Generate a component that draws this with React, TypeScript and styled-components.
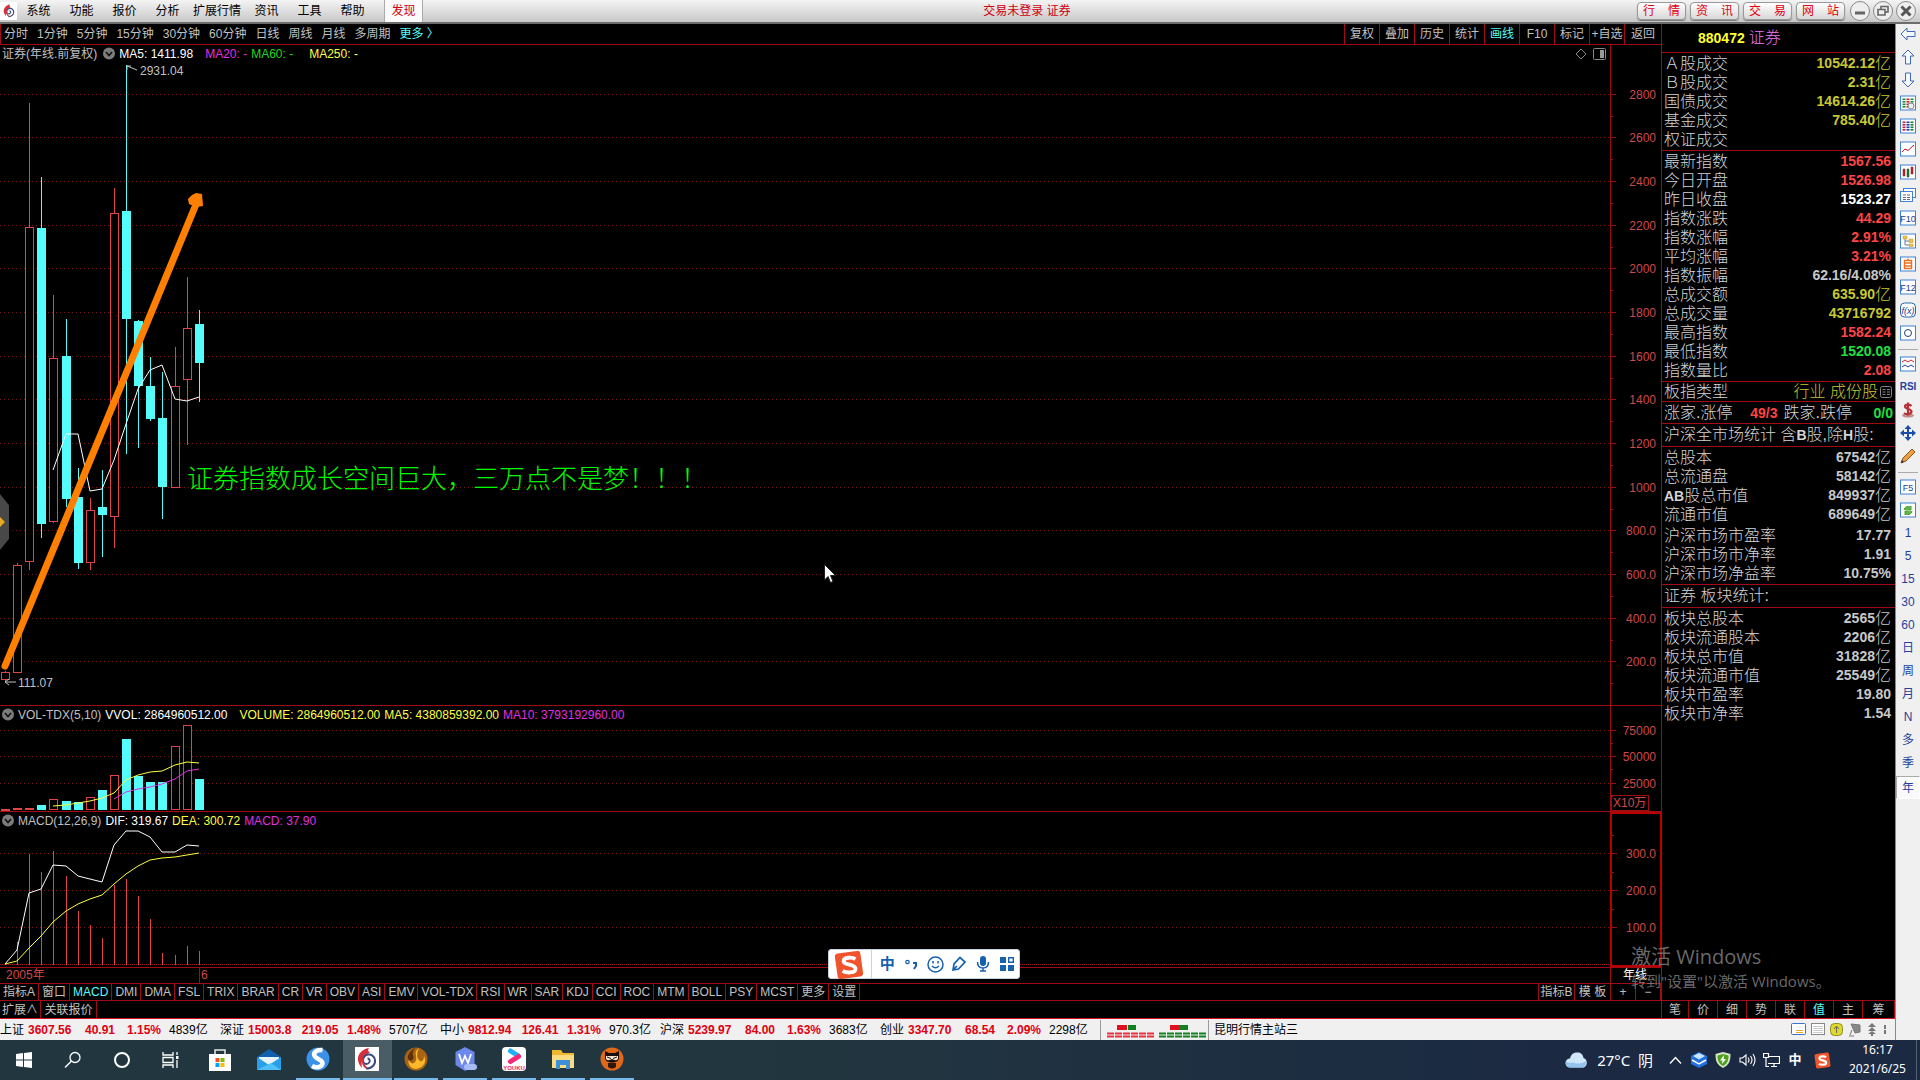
import React from 'react';
import styled, { createGlobalStyle } from 'styled-components';

const RED = '#a00c14';
const CYAN = '#54fcfc';
const CANDLE_RED = '#e04444';

const GlobalStyle = createGlobalStyle`
  * { box-sizing: border-box; }
  body { margin: 0; background: #000; overflow: hidden; }
  body, button { font-family: "Liberation Sans", "Noto Sans CJK SC", sans-serif; font-size: 12px; font-weight: 400; }
  button { margin: 0; padding: 0; border: 0; background: none; color: inherit; white-space: nowrap; line-height: 16px; cursor: default; }
  b { font-weight: 700; }
  svg { display: block; flex-shrink: 0; }
  svg text { font-family: "Liberation Sans", "Noto Sans CJK SC", sans-serif; }
  dl, dt, dd, h1, h2, p { margin: 0; font-weight: inherit; }
`;

/* ---------- frame ---------- */
const Screen = styled.div`
  position: relative; display: flex; flex-direction: column; height: 100vh; min-height: 700px;
  color: #c0c0c0; overflow: hidden; line-height: 16px;
`;
const Work = styled.div`display: flex; flex: 1; min-height: 0;`;
const Terminal = styled.main`display: flex; flex-direction: column; flex: 1; min-width: 0; border-right: 1px solid #888;`;
const Upper = styled.div`display: flex; flex: 1; min-height: 0;`;
const ChartColumn = styled.section`display: flex; flex-direction: column; flex: 1; min-width: 0; overflow: hidden;`;

/* ---------- menu bar ---------- */
const MenuBar = styled.header`
  display: grid; grid-template-columns: 1fr auto 1fr; align-items: center; height: 24px; flex-shrink: 0;
  background: linear-gradient(#f4f4f4, #c8c8c8); border-bottom: 2px solid #6c6c6c; color: #000;
`;
const MenuLeft = styled.nav`display: flex; align-items: center; height: 22px;`;
const Logo = styled.div`display: flex; align-items: center; justify-content: center; width: 17px; height: 18px; background: #fff;`;
const MenuItem = styled.button`min-width: 43px; padding: 0 4px; height: 22px;`;
const Discover = styled(MenuItem)`
  min-width: 39px; margin-left: 10px; color: #d00010; background: #fafafa; border: solid #aaa; border-width: 0 1px;
`;
const LoginTitle = styled.div`color: #d00010; padding-left: 134px;`;
const MenuRight = styled.div`display: flex; justify-content: flex-end; align-items: center; gap: 4px; padding-right: 6px;`;
const PillButton = styled.button`
  display: flex; justify-content: space-between; align-items: center; width: 49px; height: 18px; padding: 0 5px;
  border: 1px solid #999; border-radius: 4px; color: #e00010;
  background: linear-gradient(#fff, #d8d8d8); box-shadow: 0 1px 1px #777;
`;
const RoundButton = styled.button`
  display: flex; align-items: center; justify-content: center; width: 20px; height: 20px; margin-right: -2px; margin-left: 1px;
  border: 1px solid #888; border-radius: 50%; background: #eee; color: #666;
`;

/* ---------- period row ---------- */
const PeriodRow = styled.nav`
  display: flex; justify-content: space-between; height: 21px; flex-shrink: 0; border-bottom: 1px solid ${RED}; border-left: 1px solid ${RED};
`;
const Periods = styled.div`display: flex; gap: 9px; padding-left: 3px; align-items: center;`;
const PeriodButton = styled.button<{ $on?: boolean }>`color: ${p => (p.$on ? CYAN : '#c0c0c0')}; flex-shrink: 0;`;
const Tools = styled.div`display: flex;`;
const ToolButton = styled.button<{ $on?: boolean }>`
  width: 35px; border-left: 1px solid ${RED}; color: ${p => (p.$on ? CYAN : '#c0c0c0')};
  &:last-child { width: 37px; }
`;

/* ---------- chart panels ---------- */
const Panel = styled.div<{ $height?: number }>`
  display: flex; border-bottom: 1px solid ${RED}; overflow: hidden; flex: ${p => (p.$height ? `0 0 ${p.$height}px` : '1 1 0')};
`;
const Plot = styled.div`position: relative; flex: 1; min-width: 0; display: flex; flex-direction: column;`;
const Legend = styled.div`display: flex; align-items: center; height: 17px; padding-left: 2px; gap: 4px; white-space: nowrap;`;
const LegendItem = styled.span<{ $color: string; $after?: number }>`color: ${p => p.$color}; margin-right: ${p => p.$after || 0}px;`;
const Canvas = styled.svg`flex: 1; width: 100%; min-height: 0;`;
const Axis = styled.div<{ $strong?: boolean }>`
  width: 51px; flex-shrink: 0; display: flex; position: relative;
  border-left: 1px solid ${RED};
  ${p => p.$strong && 'border: 2px solid #b80000; border-right-width: 1px; border-left-width: 2px;'}
`;
const AxisCanvas = styled.svg`width: 100%; height: 100%;`;
const UnitTag = styled.span`
  position: absolute; left: 0; bottom: 0; width: 38px; height: 16px; border: 1px solid ${RED}; color: #d04848; padding-left: 1px; line-height: 14px;
`;
const PanelToggle = styled.div`
  position: absolute; left: 0; top: 449px; width: 9px; height: 56px; background: #484848; overflow: hidden;
  clip-path: polygon(0 0, 100% 20%, 100% 80%, 0 100%); display: flex; align-items: center;
`;
const ChartNote = styled.p`
  position: absolute; left: 187px; top: 416px; color: #00f800; font-size: 26px; font-weight: 300; line-height: 36px; white-space: nowrap;
`;
const CornerIcons = styled.div`position: absolute; right: 4px; top: 3px; display: flex; gap: 6px; align-items: center;`;

const DateRow = styled.div`
  display: flex; height: 16px; flex-shrink: 0; border-bottom: 1px solid ${RED}; color: #d04848; line-height: 15px;
`;
const DateStart = styled.span`width: 199px; padding-left: 6px;`;
const DateTick = styled.span`flex: 1; border-left: 1px solid ${RED}; padding-left: 1px;`;
const DatePeriod = styled.span`width: 51px; border-left: 1px solid ${RED}; padding-left: 12px; color: #fff;`;

const TabRow = styled.nav`display: flex; height: 17px; flex-shrink: 0; border-bottom: 1px solid ${RED};`;
const Tab = styled.button<{ $on?: boolean; $width?: number }>`
  padding: 0 3px; ${p => (p.$width ? `width: ${p.$width}px; padding: 0;` : '')}
  border-right: 1px solid ${RED}; color: ${p => (p.$on ? CYAN : '#c0c0c0')}; flex-shrink: 0;
`;
const Spacer = styled.div`flex: 1; border-right: 1px solid ${RED};`;
const ExtRow = styled(TabRow)`height: 18px; border-bottom-color: #d01020;`;

/* ---------- quote panel ---------- */
const Quote = styled.aside`
  width: 234px; flex-shrink: 0; border-left: 1px solid ${RED}; border-bottom: 1px solid ${RED};
  color: #d4d4d4; font-size: 16px; font-weight: 300; overflow: hidden;
`;
const QuoteHead = styled.h1`
  display: flex; align-items: center; gap: 4px; height: 29px; padding-left: 36px; border-bottom: 1px solid ${RED}; font-size: 16px; color: #f078f8;
`;
const Code = styled.b`font-size: 14px; color: #ffff30;`;
const Block = styled.dl`padding: 1px 0; border-bottom: 1px solid ${RED}; &:last-child { border: 0; }`;
const Row = styled.div<{ $gap?: boolean }>`
  display: flex; justify-content: space-between; align-items: center; height: 19px; padding: 0 4px 0 2px; line-height: 19px;
  margin-top: ${p => (p.$gap ? '2px' : '0')}; white-space: nowrap;
`;
const Name = styled.dt`b { font-size: 14px; }`;
const Value = styled.dd<{ $color?: string }>`
  display: flex; align-items: center; color: ${p => p.$color || '#c8c8c8'}; font-size: 16px;
  b { font-size: 14px; }
`;
const Strip = styled.h2<{ $height: number }>`
  display: flex; align-items: center; justify-content: space-between; height: ${p => p.$height}px; padding: 0 2px;
  border-bottom: 1px solid ${RED}; font-size: 16px; white-space: pre;
  b { font-size: 14px; }
`;
const Tint = styled.span<{ $color: string }>`color: ${p => p.$color}; display: inline-flex; align-items: center; gap: 2px;`;

/* ---------- side tool strip ---------- */
const Side = styled.nav`display: flex; flex-direction: column; width: 24px; flex-shrink: 0; background: #f0f0f0;`;
const SideButton = styled.button<{ $on?: boolean }>`
  display: flex; align-items: center; justify-content: center; height: 23px; padding-bottom: 3px; color: #24409c; font-size: 12px;
  ${p => p.$on && 'background: #fafafa; border: 1px solid #aaa; border-right-color: #fff; border-bottom-color: #fff; padding: 0;'}
`;
const SideRule = styled.div`height: 1px; margin: 3px 2px 4px; background: #aaa;`;
const RsiText = styled.b`font-size: 10px;`;

/* ---------- status bar ---------- */
const Status = styled.footer`
  display: flex; align-items: center; height: 21px; flex-shrink: 0; background: #f0f0f0; color: #000; overflow: hidden;
`;
const Index = styled.div`
  display: grid; grid-template-columns: 28px 46px 52px 36px 58px; width: 220px; flex-shrink: 0; white-space: nowrap;
  b { color: #e00010; text-align: center; }
  b:nth-child(2) { text-align: left; }
  span:last-child { padding-left: 7px; }
`;
const Meter = styled.div`border: solid #999; border-width: 0 1px; width: 109px; height: 20px; flex-shrink: 0;`;
const Server = styled.span`padding-left: 5px; flex: 1;`;
const StatusIcons = styled.div`display: flex; align-items: center; gap: 5px; padding-right: 7px;`;

/* ---------- taskbar ---------- */
const Taskbar = styled.div`
  display: flex; justify-content: space-between; height: 40px; flex-shrink: 0; background: linear-gradient(90deg, #21363f, #22363f 40%, #1b2a42 80%); color: #fff;
`;
const Apps = styled.div`display: flex;`;
const AppButton = styled.button<{ $run?: boolean; $on?: boolean }>`
  display: flex; align-items: center; justify-content: center; width: 49px; height: 40px; padding-right: 2px;
  background: ${p => (p.$on ? '#4a5c66' : 'none')};
  ${p => p.$run && `border-bottom: 2px solid; border-image: linear-gradient(90deg, transparent ${p.$on ? 0 : 4}px, #76b9ed ${p.$on ? 0 : 4}px, #76b9ed ${p.$on ? 49 : 44}px, transparent ${p.$on ? 49 : 44}px) 2;`}
`;
const Tray = styled.div`
  display: flex; align-items: center; font-family: "Noto Sans", "Noto Sans CJK SC", sans-serif; padding-right: 3px;
`;
const Weather = styled.button`
  display: flex; align-items: center; gap: 10px; font-family: inherit; font-size: 15px; margin-right: 12px;
`;
const TrayIcons = styled.div`display: flex; align-items: center; gap: 4px; button { width: 20px; display: flex; justify-content: center; font-size: 13px; font-weight: 700; }`;
const Sogou = styled.div`margin: 0 8px 0 9px;`;
const Clock = styled.button`
  display: flex; flex-direction: column; align-items: center; width: 78px; font-family: inherit; font-size: 12px; line-height: 19px;
  border-right: 1px solid #53606f; height: 40px;
`;

/* ---------- floating items ---------- */
const Ime = styled.div`
  position: absolute; left: 43.1%; bottom: 101px; width: 192px; height: 30px; display: flex; align-items: center; background: #fff; border: 1px solid #c4d4e4; border-radius: 3px;
  padding: 0 0 0 5px; color: #1660b0;
`;
const ImeLogo = styled.div`width: 39px; height: 28px; border-right: 1px solid #f4c4b4; margin-right: 3px;`;
const ImeButton = styled.button`width: 24px; display: flex; justify-content: center; align-items: center; font-size: 15px; font-weight: 700;`;
const Watermark = styled.div`
  position: absolute; right: 92px; bottom: 89px; width: 197px; color: #868686cc; font-family: "Open Sans", "Noto Sans CJK SC", sans-serif; white-space: nowrap; pointer-events: none;
`;
const WmTitle = styled.p`font-size: 20px; line-height: 28px;`;
const WmText = styled.p`font-size: 15px; line-height: 20px;`;
const Pointer = styled.svg`position: absolute; left: 824px; top: 564px;`;

/* ---------- data ---------- */
const menus = ['系统', '功能', '报价', '分析', '扩展行情', '资讯', '工具', '帮助'];
const periods = ['分时', '1分钟', '5分钟', '15分钟', '30分钟', '60分钟', '日线', '周线', '月线', '多周期', '更多 〉'];
const tools = ['复权', '叠加', '历史', '统计', '画线', 'F10', '标记', '+自选', '返回'];
const indicators = ['指标A', '窗口', 'MACD', 'DMI', 'DMA', 'FSL', 'TRIX', 'BRAR', 'CR', 'VR', 'OBV', 'ASI', 'EMV', 'VOL-TDX', 'RSI', 'WR', 'SAR', 'KDJ', 'CCI', 'ROC', 'MTM', 'BOLL', 'PSY', 'MCST', '更多', '设置'];
const panes = ['笔', '价', '细', '势', '联', '值', '主', '筹'];
const indices = [
  ['上证', '3607.56', '40.91', '1.15%', '4839亿'],
  ['深证', '15003.8', '219.05', '1.48%', '5707亿'],
  ['中小', '9812.94', '126.41', '1.31%', '970.3亿'],
  ['沪深', '5239.97', '84.00', '1.63%', '3683亿'],
  ['创业', '3347.70', '68.54', '2.09%', '2298亿'],
];

const Y = '#c8c832', R = '#ff4444', W = '#ffffff', G = '#20e040';
type QuoteRow = [string, string, string?];
const turnover: QuoteRow[] = [['Ａ股成交', '10542.12亿', Y], ['Ｂ股成交', '2.31亿', Y], ['国债成交', '14614.26亿', Y], ['基金成交', '785.40亿', Y], ['权证成交', '', Y]];
const prices: QuoteRow[] = [
  ['最新指数', '1567.56', R], ['今日开盘', '1526.98', R], ['昨日收盘', '1523.27', W], ['指数涨跌', '44.29', R], ['指数涨幅', '2.91%', R], ['平均涨幅', '3.21%', R],
  ['指数振幅', '62.16/4.08%'], ['总成交额', '635.90亿', Y], ['总成交量', '43716792', Y], ['最高指数', '1582.24', R], ['最低指数', '1520.08', G], ['指数量比', '2.08', R],
];
const market: QuoteRow[] = [
  ['总股本', '67542亿'], ['总流通盘', '58142亿'], ['AB股总市值', '849937亿'], ['流通市值', '689649亿'], ['沪深市场市盈率', '17.77'], ['沪深市场市净率', '1.91'], ['沪深市场净益率', '10.75%'],
];
const sector: QuoteRow[] = [['板块总股本', '2565亿'], ['板块流通股本', '2206亿'], ['板块总市值', '31828亿'], ['板块流通市值', '25549亿'], ['板块市盈率', '19.80'], ['板块市净率', '1.54']];

const barX = [5, 17, 29, 41, 53, 66, 78, 90, 102, 114, 126, 138, 150, 162, 175, 187, 199];

/* [up, high, body top, body bottom, low], measured from the top of the screen */
const candles: [boolean, number, number, number, number][] = [
  [true, 671, 672, 679, 681], [true, 563, 565, 672, 672], [true, 103, 227, 561, 570], [false, 177, 228, 523, 538], [true, 295, 358, 521, 523],
  [false, 319, 356, 498, 507], [false, 468, 497, 562, 569], [true, 498, 510, 562, 570], [false, 470, 507, 514, 557], [true, 188, 213, 516, 548],
  [false, 65, 211, 318, 454], [false, 320, 321, 385, 448], [false, 357, 386, 418, 421], [false, 372, 418, 486, 519], [true, 347, 386, 487, 487],
  [true, 277, 328, 379, 445], [false, 310, 324, 362, 402],
];
const ma5 = [470, 434, 434, 491, 489, 460, 424, 389, 370, 365, 399, 401, 397];
const volume = [809, 808, 808, 805, 799, 801, 802, 797, 790, 775, 739, 776, 782, 782, 746, 725, 779];
const volMa5 = [806, 805, 803, 801, 798, 793, 780, 775, 772, 771, 765, 762, 763];
const volMa10 = [799, 792, 789, 787, 784, 779, 771, 769];
const hist = [964, 942, 854, 872, 851, 876, 911, 925, 938, 885, 879, 896, 919, 953, 955, 946, 951];
const dif = [964, 950, 893, 889, 865, 866, 876, 879, 882, 845, 831, 831, 837, 852, 852, 845, 846];
const dea = [964, 961, 948, 936, 922, 911, 904, 899, 895, 884, 874, 866, 860, 858, 857, 855, 853];

const line = (ys: number[]) => ys.map((y, i) => `${barX[barX.length - ys.length + i]},${y}`).join(' ');

const priceTicks: [number, string][] = [
  [94, '2800'], [137, '2600'], [181, '2400'], [225, '2200'], [268, '2000'], [312, '1800'], [356, '1600'],
  [399, '1400'], [443, '1200'], [487, '1000'], [530, '800.0'], [574, '600.0'], [618, '400.0'], [661, '200.0'],
];
const volTicks: [number, string][] = [[730, '75000'], [756, '50000'], [783, '25000']];
const macdTicks: [number, string][] = [[853, '300.0'], [890, '200.0'], [927, '100.0']];

const Grid = ({ ticks }: { ticks: [number, string][] }) => (
  <>{ticks.map(([y]) => <line key={y} x1="0" x2="100%" y1={y + 0.5} y2={y + 0.5} stroke="#78141a" strokeDasharray="1 3" />)}</>
);

const Ticks = ({ ticks, top, step, right = 45 }: { ticks: [number, string][]; top: number; step: number; right?: number }) => (
  <AxisCanvas>
    <g transform={`translate(0 ${-top})`}>
      {ticks.map(([y, label]) => (
        <React.Fragment key={y}>
          <line x1="0" x2="5" y1={y + 0.5} y2={y + 0.5} stroke={RED} />
          <line x1="0" x2="2" y1={y + step + 0.5} y2={y + step + 0.5} stroke={RED} />
          <text x={right} y={y + 5} textAnchor="end" fontSize="12" fill="#d04848">{label}</text>
        </React.Fragment>
      ))}
    </g>
  </AxisCanvas>
);

const Chevron = () => (
  <svg width="12" height="13" viewBox="0 0 12 13"><circle cx="6" cy="6.5" r="6" fill="#7c7c7c" /><path d="M3 5l3 3.5L9 5" fill="none" stroke="#111" strokeWidth="1.6" /></svg>
);

const Swirl = ({ size }: { size: number }) => (
  <svg width={size} height={size} viewBox="0 0 24 24">
    <rect width="24" height="24" fill="#fff" />
    <path d="M14 1C7 2 2.500 7 3 13c.3 3 2 6 4 8C6 15 7 9 15 5.500 13 4.500 12.500 3 14 1z" fill="#d8303a" />
    <path d="M11 21.500c6 0 9.500-4 9-8.500-.5-4-4-6-7-5.500-4 .7-6 5-4.500 8 1 2 5 2 6-.5.700-2-.5-3.500-2-3.500" fill="none" stroke="#3c4c80" strokeWidth="2" />
    <path d="M8.500 11c-1.500 4-.5 7.500 3 10" fill="none" stroke="#d8303a" strokeWidth="1.800" />
  </svg>
);

const SogouLogo = ({ size }: { size: number }) => (
  <svg width={size} height={size} viewBox="0 0 28 28">
    <rect x="2" y="2" width="24" height="24" rx="3" fill="#f0542c" transform="rotate(-8 14 14)" />
    <path d="M20 8.500C17 6.500 9 6.500 9 10.500c0 4 11 2.500 11 7 0 4.500-8.500 4-12 2" fill="none" stroke="#fff" strokeWidth="3.600" />
  </svg>
);

const Rows = ({ rows, gapAt }: { rows: QuoteRow[]; gapAt?: number }) => (
  <Block>
    {rows.map(([name, value, color], i) => {
      const unit = value.endsWith('亿') ? '亿' : '';
      return (
        <Row key={name} $gap={i === gapAt}>
          <Name>{name.startsWith('AB') ? <><b>AB</b>{name.slice(2)}</> : name}</Name>
          <Value $color={color}><b>{unit ? value.slice(0, -1) : value}</b>{unit}</Value>
        </Row>
      );
    })}
  </Block>
);

/* ---------- side icons ---------- */
const Framed = ({ children }: { children?: React.ReactNode }) => (
  <svg width="16" height="16" viewBox="0 0 16 16"><rect x="0.5" y="1" width="15" height="14" fill="#fff" stroke="#4080d8" />{children}</svg>
);
const FramedText = ({ label }: { label: string }) => (
  <Framed><text x="8" y="12" fontSize="9" textAnchor="middle" fill="#1c3c98">{label}</text></Framed>
);
const Arrow = ({ turn }: { turn: number }) => (
  <svg width="16" height="16" viewBox="0 0 16 16"><path transform={`rotate(${turn} 8 8)`} d="M1 8l6-6v3.500h8v5H7V14z" fill="#f4f8ff" stroke="#4468b8" /></svg>
);
const cells = (colors: string[]) => colors.map((c, col) => [3.5, 6, 8.5, 11].map(y => <rect key={`${col}-${y}`} x={2.5 + col * 4} y={y} width="3" height="1.6" fill={c} />));

const sideTop: [string, React.ReactNode][] = [
  ['后退', <Arrow turn={0} />], ['上一个', <Arrow turn={90} />], ['下一个', <Arrow turn={-90} />],
  ['报价', <Framed>{cells(['#109040', '#d02030', '#109040'])}<circle cx="11" cy="11" r="3" fill="#eee" stroke="#888" /></Framed>],
  ['列表', <Framed>{cells(['#c02040', '#2038b0', '#108040'])}</Framed>],
  ['分时图', <Framed><path d="M2 11l3-3 3 1.500L14 4" stroke="#d01020" fill="none" /></Framed>],
  ['K线图', <Framed><path d="M4 5v7M12 3v7" stroke="#e01020" strokeWidth="2.500" /><path d="M8 5v8" stroke="#108030" strokeWidth="2.500" /><path d="M4 4v9M12 2v9M8 4v10" stroke="#444" strokeWidth=".6" /></Framed>],
  ['多窗', <svg width="16" height="16" viewBox="0 0 16 16"><rect x="3.500" y="1.500" width="12" height="9" fill="#fff" stroke="#4080d8" /><rect x="0.5" y="4.500" width="12" height="10" fill="#fff" stroke="#4080d8" /><path d="M3 8h7M3 10.500h7M3 12.500h7" stroke="#668" strokeDasharray="3 1" /></svg>],
  ['F10', <FramedText label="F10" />],
  ['树形', <Framed><path d="M5 5v7h4M5 8h4" stroke="#6080a0" fill="none" /><path d="M3 3h4v3H3zM9 6h4v3.500H9zM9 11h4v2.500H9z" fill="#f0c050" stroke="#c89020" strokeWidth=".5" /></Framed>],
  ['自选', <Framed><path d="M4.500 4.500h7v8h-7zM4.500 7h7M4.500 10h7M8 2.500v2" stroke="#f07020" strokeWidth="1.400" fill="none" /></Framed>],
  ['F12', <FramedText label="F12" />],
  ['公式', <svg width="16" height="16" viewBox="0 0 16 16"><rect x="0.5" y="1" width="15" height="14" rx="4" fill="#fff" stroke="#2868a8" /><text x="8" y="12" fontSize="9" fontStyle="italic" textAnchor="middle" fill="#1c3c98">f(x)</text></svg>],
  ['选项', <Framed><circle cx="8" cy="8" r="3.500" fill="none" stroke="#204080" /></Framed>],
];
const sideMid: [string, React.ReactNode][] = [
  ['指标', <Framed><path d="M2 6l3-2 3 2 3-2 3 2" stroke="#d02030" fill="none" /><path d="M2 11l3-2 3 2 3-2 3 2" stroke="#2040c0" fill="none" /></Framed>],
  ['RSI', <RsiText>RSI</RsiText>],
  ['资金', <svg width="16" height="16" viewBox="0 0 16 16"><ellipse cx="8" cy="13.500" rx="6" ry="2" fill="#c09090" /><path d="M11.500 4C10 2 5 2 5 4.500s6.500 2.500 6.500 5-5 3.500-7.500 1.500M8 .5v13" stroke="#b83038" strokeWidth="2.200" fill="none" /></svg>],
  ['移动', <svg width="16" height="16" viewBox="0 0 16 16"><path d="M8 0l3.500 4H9v3h3V4.500L16 8l-4 3.500V9H9v3h2.500L8 16l-3.500-4H7V9H4v2.500L0 8l4-3.500V7h3V4H4.500z" fill="#1c4ca8" /></svg>],
  ['画线工具', <svg width="16" height="16" viewBox="0 0 16 16"><path d="M1 15l2-5 9-9 3 3-9 9z" fill="#eca040" stroke="#905020" /><path d="M1 15l1-3 2 2z" fill="#333" /></svg>],
];
const sideLow: [string, React.ReactNode][] = [
  ['F5', <FramedText label="F5" />],
  ['刷新', <Framed><path d="M4 8a4 4 0 016-3l1-1v4H8M12 9a4 4 0 01-6 3l-1 1V9h3" fill="#60b840" stroke="#48a038" /></Framed>],
  ...['1', '5', '15', '30', '60', '日', '周', '月', 'N', '多', '季', '年'].map(t => [t, t] as [string, React.ReactNode]),
];
const SideGroup = ({ items }: { items: [string, React.ReactNode][] }) => (
  <>{items.map(([name, icon]) => <SideButton key={name} aria-label={name} $on={name === '年'}>{icon}</SideButton>)}</>
);

/* ---------- taskbar icons ---------- */
const apps: [string, React.ReactNode][] = [
  ['开始', <svg width="16" height="16" viewBox="0 0 16 16"><path d="M0 2l7-1v6.500H0zM8 1l8-1v7.500H8zM0 8.500h7V15l-7-1zM8 8.500h8V16l-8-1z" fill="#fff" /></svg>],
  ['搜索', <svg width="18" height="18" viewBox="0 0 18 18"><circle cx="11" cy="6.500" r="5" fill="none" stroke="#fff" strokeWidth="1.300" /><path d="M7.500 10L1 16.500" stroke="#fff" strokeWidth="1.500" /></svg>],
  ['Cortana', <svg width="18" height="18" viewBox="0 0 18 18"><circle cx="9" cy="9" r="7" fill="none" stroke="#fff" strokeWidth="2" /></svg>],
  ['任务视图', <svg width="18" height="16" viewBox="0 0 18 16"><path d="M1 0v3h10V0M1 16v-3h10v3M1 5.500h10v5H1zM15 0v3M15 8v8" fill="none" stroke="#fff" strokeWidth="1.300" /><rect x="14" y="4" width="2.500" height="3" fill="#fff" /></svg>],
  ['商店', <svg width="24" height="24" viewBox="0 0 24 24"><path d="M7 7V2h10v5" fill="none" stroke="#e8e8e8" strokeWidth="1.500" /><path d="M1 6h22v17H1z" fill="#fff" /><path d="M7.500 10h4v4h-4z" fill="#f25022" /><path d="M12.500 10h4v4h-4z" fill="#7fba00" /><path d="M7.500 15h4v4h-4z" fill="#00a4ef" /><path d="M12.500 15h4v4h-4z" fill="#ffb900" /></svg>],
  ['邮件', <svg width="24" height="24" viewBox="0 0 24 24"><path d="M0 9l12-8 12 8v13H0z" fill="#1060b0" /><path d="M2 9h20v8H2z" fill="#e8f4fc" /><path d="M0 9l12 8 12-8v13H0z" fill="#28a0e8" /><path d="M0 22l14-7 10 7z" fill="#50c0f8" /></svg>],
  ['搜狗浏览器', <svg width="24" height="24" viewBox="0 0 24 24"><circle cx="12" cy="12" r="11.500" fill="#3c90e8" /><path d="M16.500 3C10 2.500 6.500 6 9 9.500c2 3 8 3 7.500 7C16 20 11 21.500 6 19" fill="none" stroke="#fff" strokeWidth="4.500" /></svg>],
  ['通达信', <Swirl size={24} />],
  ['行情', <svg width="24" height="24" viewBox="0 0 24 24"><circle cx="12" cy="12" r="11.500" fill="#a86414" /><path d="M15 1C8 6 15 10 11 15c-2 3-6 1-6-3-2 5 2 10 7 10 8-1 11-8 8-13 0 4-2 6-4 5-3-2-4-7-1-13z" fill="#fcb828" /><path d="M12 .5C6 3 3 9 4 12c3 4 7 0 5-4-1-3 1-6 3-7.500z" fill="#5c3008" /></svg>],
  ['WPS', <svg width="24" height="24" viewBox="0 0 24 24"><path d="M12 0l9.500 5v13L12 24 2.500 18V5z" fill="#6c88ec" /><path d="M6 7l3 9 3-7 3 7 3-9" fill="none" stroke="#fff" strokeWidth="1.800" /><rect x="11" y="17" width="13" height="6" rx="3" fill="#a8bcf8" /></svg>],
  ['优酷', <svg width="24" height="24" viewBox="0 0 24 24"><rect width="24" height="24" rx="4" fill="#fff" /><path d="M8.500 4l8 5" stroke="#20b0f8" strokeWidth="5" strokeLinecap="round" /><path d="M8.500 14.500l8-5" stroke="#f82878" strokeWidth="5" strokeLinecap="round" /><text x="12" y="23" fontSize="6" fontWeight="700" textAnchor="middle" fill="#f82060">YOUKU</text></svg>],
  ['文件', <svg width="24" height="22" viewBox="0 0 24 22"><path d="M1 2h9l2 3h11v15H1z" fill="#f0b830" /><path d="M1 7h22v13H1z" fill="#fcdc80" /><path d="M5 12h14v9h-4v-4H9v4H5z" fill="#3c90d8" /></svg>],
  ['助手', <svg width="24" height="24" viewBox="0 0 24 24"><circle cx="12" cy="12" r="11.500" fill="#e06818" /><path d="M5 4l4 2h6l4-2v7c0 6-14 6-14 0z" fill="#181010" /><path d="M6 9h12v3c-2 2-4 1-6 0-2 1-4 2-6 0z" fill="#f8e8d0" /><path d="M7 10l4 1.500M17 10l-4 1.500" stroke="#181010" /><path d="M8 16h8v4q-4 3-8 0z" fill="#301808" /></svg>],
];

export default function App() {
  return (
    <Screen>
      <GlobalStyle />
      <MenuBar>
        <MenuLeft>
          <Logo><Swirl size={14} /></Logo>
          {menus.map(m => <MenuItem key={m}>{m}</MenuItem>)}
          <Discover>发现</Discover>
        </MenuLeft>
        <LoginTitle>交易未登录 证券</LoginTitle>
        <MenuRight>
          {['行情', '资讯', '交易', '网站'].map(t => <PillButton key={t} aria-label={t}><span>{t[0]}</span><span>{t[1]}</span></PillButton>)}
          <RoundButton aria-label="最小化"><svg width="12" height="12"><path d="M1 8h10" stroke="#666" strokeWidth="3" /></svg></RoundButton>
          <RoundButton aria-label="还原"><svg width="12" height="12"><path d="M4 4V1.500h7V7H8.500M1 4.500h7V10H1z" fill="none" stroke="#666" strokeWidth="1.600" /></svg></RoundButton>
          <RoundButton aria-label="关闭"><svg width="12" height="12"><path d="M1.500 1.500l9 9M10.500 1.500l-9 9" stroke="#555" strokeWidth="3" /></svg></RoundButton>
        </MenuRight>
      </MenuBar>

      <Work>
        <Terminal>
          <Upper>
            <ChartColumn>
              <PeriodRow>
                <Periods>{periods.map((p, i) => <PeriodButton key={p} $on={i === 10}>{p}</PeriodButton>)}</Periods>
                <Tools>{tools.map(t => <ToolButton key={t} $on={t === '画线'}>{t}</ToolButton>)}</Tools>
              </PeriodRow>

              <Panel>
                <Plot>
                  <Legend>
                    <LegendItem $color="#c0c0c0" $after={2}>证券(年线.前复权)</LegendItem>
                    <Chevron />
                    <LegendItem $color="#fff" $after={8}>MA5: 1411.98</LegendItem>
                    <LegendItem $color="#e030e0">MA20: -</LegendItem>
                    <LegendItem $color="#20d820" $after={12}>MA60: -</LegendItem>
                    <LegendItem $color="#ffff40">MA250: -</LegendItem>
                  </Legend>
                  <Canvas>
                    <g transform="translate(0 -62)">
                      <Grid ticks={priceTicks} />
                      {candles.map(([up, high, top, bottom, low], i) => {
                        const x = barX[i];
                        const color = up ? CANDLE_RED : CYAN;
                        return (
                          <g key={x} stroke={color}>
                            <path d={`M${x + 0.5} ${high}V${top}M${x + 0.5} ${bottom}V${low}`} />
                            <rect x={x - 3.5} y={top + 0.5} width="8" height={bottom - top} fill={up ? '#000' : color} />
                          </g>
                        );
                      })}
                      <polyline points={line(ma5)} fill="none" stroke="#fff" />
                      <path d="M5 666L197 202" stroke="#ff8000" strokeWidth="7" strokeLinecap="round" />
                      <path d="M188 199l4-4 4-2 6 1 1 12-7 1-7-3z" fill="#ff8000" />
                      <path d="M127 66l10 4M127 66h4M127 66v4M5 682h11M5 682l4-3M5 682l4 3" stroke="#c0c0c0" fill="none" />
                      <text x="140" y="75" fontSize="12" fill="#c0c0c0">2931.04</text>
                      <text x="18" y="687" fontSize="12" fill="#c0c0c0">111.07</text>
                    </g>
                  </Canvas>
                  <ChartNote>证券指数成长空间巨大，三万点不是梦！！！</ChartNote>
                  <PanelToggle><svg width="6" height="12"><path d="M0 1l5 5-5 5z" fill="#e8a820" /></svg></PanelToggle>
                  <CornerIcons>
                    <svg width="12" height="12"><path d="M6 1l5 5-5 5-5-5z" fill="none" stroke="#888" /></svg>
                    <svg width="13" height="12"><rect x="0.5" y="0.5" width="12" height="11" rx="1" fill="none" stroke="#888" /><rect x="7" y="2" width="4" height="8" fill="#999" /></svg>
                  </CornerIcons>
                </Plot>
                <Axis><Ticks ticks={priceTicks} top={45} step={22} /></Axis>
              </Panel>

              <Panel $height={106}>
                <Plot>
                  <Legend>
                    <Chevron />
                    <LegendItem $color="#c0c0c0">VOL-TDX(5,10)</LegendItem>
                    <LegendItem $color="#fff" $after={8}>VVOL: 2864960512.00</LegendItem>
                    <LegendItem $color="#ffff40">VOLUME: 2864960512.00</LegendItem>
                    <LegendItem $color="#ffff40">MA5: 4380859392.00</LegendItem>
                    <LegendItem $color="#e030e0">MA10: 3793192960.00</LegendItem>
                  </Legend>
                  <Canvas>
                    <g transform="translate(0 -723)">
                      <Grid ticks={volTicks} />
                      {volume.map((y, i) => {
                        const up = candles[i][0];
                        return <rect key={i} x={barX[i] - 3.5} y={y + 0.5} width="8" height={Math.max(809 - y, 1)} stroke={up ? CANDLE_RED : CYAN} fill={up ? '#000' : CYAN} />;
                      })}
                      <polyline points={line(volMa5)} fill="none" stroke="#ffff40" />
                      <polyline points={line(volMa10)} fill="none" stroke="#e030e0" />
                    </g>
                  </Canvas>
                </Plot>
                <Axis><Ticks ticks={volTicks} top={706} step={13} /><UnitTag>X10万</UnitTag></Axis>
              </Panel>

              <Panel $height={156}>
                <Plot>
                  <Legend>
                    <Chevron />
                    <LegendItem $color="#c0c0c0">MACD(12,26,9)</LegendItem>
                    <LegendItem $color="#fff">DIF: 319.67</LegendItem>
                    <LegendItem $color="#ffff40">DEA: 300.72</LegendItem>
                    <LegendItem $color="#e030e0">MACD: 37.90</LegendItem>
                  </Legend>
                  <Canvas>
                    <g transform="translate(0 -829)">
                      <Grid ticks={macdTicks} />
                      <line x1="0" x2="100%" y1="964.5" y2="964.5" stroke={RED} strokeDasharray="1 1" />
                      {hist.map((y, i) => <line key={i} x1={barX[i] + 0.5} x2={barX[i] + 0.5} y1={y} y2="965" stroke={CANDLE_RED} />)}
                      <polyline points={line(dif)} fill="none" stroke="#fff" />
                      <polyline points={line(dea)} fill="none" stroke="#ffff40" />
                    </g>
                  </Canvas>
                </Plot>
                <Axis $strong><Ticks ticks={macdTicks} top={814} step={-18} right={44} /></Axis>
              </Panel>

              <DateRow><DateStart>2005年</DateStart><DateTick>6</DateTick><DatePeriod>年线</DatePeriod></DateRow>
              <TabRow>
                {indicators.map(t => <Tab key={t} $on={t === 'MACD'}>{t}</Tab>)}
                <Spacer />
                <Tab $width={36}>指标B</Tab><Tab $width={36}>模 板</Tab><Tab $width={25}>+</Tab><Tab $width={25}>−</Tab>
              </TabRow>
            </ChartColumn>

            <Quote>
              <QuoteHead><Code>880472</Code>证券</QuoteHead>
              <Rows rows={turnover} />
              <Rows rows={prices} />
              <Strip $height={20}>
                <span>板指类型</span>
                <Tint $color={Y}>行业 成份股<svg width="13" height="12"><rect x="0.5" y="0.5" width="11" height="11" rx="2" fill="none" stroke="#888" /><path d="M2.500 3.500h3M2.500 6h3M2.500 8.500h3M7 3.500h3M7 6h3M7 8.500h3" stroke="#888" /></svg></Tint>
              </Strip>
              <Strip $height={22}><span>涨家.涨停</span><Tint $color={R}><b>{'   49/3'}</b></Tint><span>跌家.跌停</span><Tint $color={G}><b>{'    0/0'}</b></Tint></Strip>
              <Strip $height={23}><span>沪深全市场统计 含<b>B</b>股,除<b>H</b>股:</span></Strip>
              <Rows rows={market} gapAt={4} />
              <Strip $height={23}><span>证券 板块统计:</span></Strip>
              <Rows rows={sector} />
            </Quote>
          </Upper>

          <ExtRow>
            <Tab $width={41}>扩展∧</Tab><Tab $width={56}>关联报价</Tab>
            <Spacer />
            {panes.map((t, i) => <Tab key={t} $width={i === 0 ? 27 : i === 7 ? 32 : 29} $on={t === '值'}>{t}</Tab>)}
          </ExtRow>
          <Status>
            {indices.map(([name, price, change, pct, amount]) => (
              <Index key={name}><span>{name}</span><b>{price}</b><b>{change}</b><b>{pct}</b><span>{amount}</span></Index>
            ))}
            <Meter>
              <svg width="107" height="20">
                <path d="M16 5h10v5H16zM69 5h9v5h-9z" fill="#e01020" /><path d="M27 5h8v5h-8zM78 5h9v5h-9z" fill="#108020" />
                <path d="M6 13.500h47M6 16.500h47" stroke="#e83040" strokeWidth="2" strokeDasharray="7 1" />
                <path d="M58 13.500h47M58 16.500h47" stroke="#108020" strokeWidth="2" strokeDasharray="7 1" />
              </svg>
            </Meter>
            <Server>昆明行情主站三</Server>
            <StatusIcons>
              <svg width="15" height="13"><rect x="0.5" y="0.5" width="14" height="11" rx="1" fill="#fff" stroke="#4070c8" /><path d="M5 7.500h7M5 9.500h7" stroke="#e0a830" /></svg>
              <svg width="14" height="13"><rect x="0.5" y="0.5" width="13" height="11" fill="#fff" stroke="#888" /><path d="M2 3.500h10M2 5.500h10M2 7.500h10M2 9.500h10" stroke="#ccc" /></svg>
              <svg width="13" height="13"><rect x="0.5" y="0.5" width="12" height="12" rx="4" fill="#e0d830" stroke="#908c20" /><path d="M6.500 10V4M4 6l2.500-3L9 6" stroke="#665" fill="none" /></svg>
              <svg width="14" height="14"><path d="M3 1l9 1v7l-5 1zM4 7l-2 5M1 13h5" fill="#888" stroke="#777" /></svg>
              <svg width="10" height="13"><path d="M5 0l4 4H1zM5 4l4 4H1zM5 8l4 3H6v2H4v-2H1z" fill="#777" /></svg>
              <svg width="6" height="13"><path d="M3 2v4M3 7v4" stroke="#777" strokeWidth="2" /></svg>
            </StatusIcons>
          </Status>
        </Terminal>

        <Side>
          <SideGroup items={sideTop} />
          <SideRule />
          <SideGroup items={sideMid} />
          <SideRule />
          <SideGroup items={sideLow} />
        </Side>
      </Work>

      <Taskbar>
        <Apps>{apps.map(([name, icon], i) => <AppButton key={name} aria-label={name} $run={i > 5} $on={i === 7}>{icon}</AppButton>)}</Apps>
        <Tray>
          <Weather>
            <svg width="22" height="16" viewBox="0 0 22 16"><path d="M5 15.500a4.500 4.500 0 010-9C6 2 9 .5 12 .5c4 0 6 2 6.500 5.500 5 1.500 4 9.500-1 9.500z" fill="#d0e6fa" /><path d="M5 15.500a4.500 4.500 0 01-4-6c3 2 5 1 7 1 4 2 8 1 13-1 0 4-1.500 6-3.500 6z" fill="#94c4ee" /></svg>
            <span>27°C&nbsp; 阴</span>
          </Weather>
          <TrayIcons>
            <button aria-label="更多图标"><svg width="13" height="9"><path d="M1 7.500l5.500-6 5.500 6" fill="none" stroke="#fff" strokeWidth="1.300" /></svg></button>
            <button aria-label="应用"><svg width="16" height="16" viewBox="0 0 16 16"><path d="M8 0l8 4v8l-8 4-8-4V4z" fill="#2070e0" /><path d="M8 1l6 3-6 3.500L2 4z" fill="#c8e4ff" /><path d="M1 8l7 4 7-4" fill="none" stroke="#fff" strokeWidth="1.500" /></svg></button>
            <button aria-label="安全"><svg width="16" height="16" viewBox="0 0 16 16"><path d="M8 0l7.500 2c0 8-2 11-7.500 14C2.500 13 .5 10 .5 2z" fill="#d8e8c8" /><path d="M8 2l5.500 1.500C13.500 9 12 12 8 14 4 12 2.500 9 2.500 3.500z" fill="#50a020" /><path d="M9 3L5 8.500h2.500L7 12l4-5H8.500z" fill="#fff" /></svg></button>
            <button aria-label="音量"><svg width="17" height="14" viewBox="0 0 17 14"><path d="M1 5h2.500L7 2v10L3.500 9H1zM9 4.500q2 2.500 0 5M11.500 3q3 4 0 8M14 1q4 6 0 12" fill="none" stroke="#fff" strokeWidth="1.100" /></svg></button>
            <button aria-label="网络"><svg width="17" height="14" viewBox="0 0 17 14"><path d="M5 3.500h11.500v7H5M8 13.500h6M11 10.500v3M.5.5h5v4h-5zM3 5v8.500h3" fill="none" stroke="#fff" strokeWidth="1.200" /></svg></button>
            <button aria-label="输入法">中</button>
          </TrayIcons>
          <Sogou><SogouLogo size={17} /></Sogou>
          <Clock><span>16:17</span><span>2021/6/25</span></Clock>
        </Tray>
      </Taskbar>

      <Watermark>
        <WmTitle>激活 Windows</WmTitle>
        <WmText>转到"设置"以激活 Windows。</WmText>
      </Watermark>
      <Ime>
        <ImeLogo><SogouLogo size={30} /></ImeLogo>
        <ImeButton>中</ImeButton>
        <ImeButton aria-label="标点"><svg width="14" height="14"><circle cx="3.500" cy="5" r="1.700" fill="none" stroke="#1660b0" strokeWidth="1.200" /><path d="M9 6h3v3l-2 3" fill="none" stroke="#1660b0" strokeWidth="2" /></svg></ImeButton>
        <ImeButton aria-label="表情"><svg width="17" height="17"><circle cx="8.500" cy="8.500" r="7.500" fill="none" stroke="#1660b0" strokeWidth="1.500" /><path d="M6 5v2.500M11 5v2.500M5 10q3.500 3.500 7 0" fill="none" stroke="#1660b0" strokeWidth="1.500" /></svg></ImeButton>
        <ImeButton aria-label="手写"><svg width="16" height="16"><path d="M2 14l1-6 6-6.500 5 4.500-6.500 7zM3 13l3-3" fill="none" stroke="#1660b0" strokeWidth="1.700" /></svg></ImeButton>
        <ImeButton aria-label="语音"><svg width="14" height="16"><rect x="4" y="0" width="6" height="10" rx="3" fill="#1660b0" /><path d="M1.500 6q0 6 5.500 6t5.500-6M7 12v3.500M4 15h6" fill="none" stroke="#1660b0" strokeWidth="1.500" /></svg></ImeButton>
        <ImeButton aria-label="工具箱"><svg width="14" height="14"><path d="M0 0h6v6H0zM0 8h6v6H0zM8 8h6v6H8z" fill="#1660b0" /><path d="M8.700.7h4.600v4.600H8.700z" fill="none" stroke="#1660b0" strokeWidth="1.400" /></svg></ImeButton>
      </Ime>
      <Pointer width="13" height="20" viewBox="0 0 13 20"><path d="M.5.5v15.500l3.500-3.500 2.500 6 2.500-1-2.500-6h5z" fill="#fff" stroke="#222" /></Pointer>
    </Screen>
  );
}
